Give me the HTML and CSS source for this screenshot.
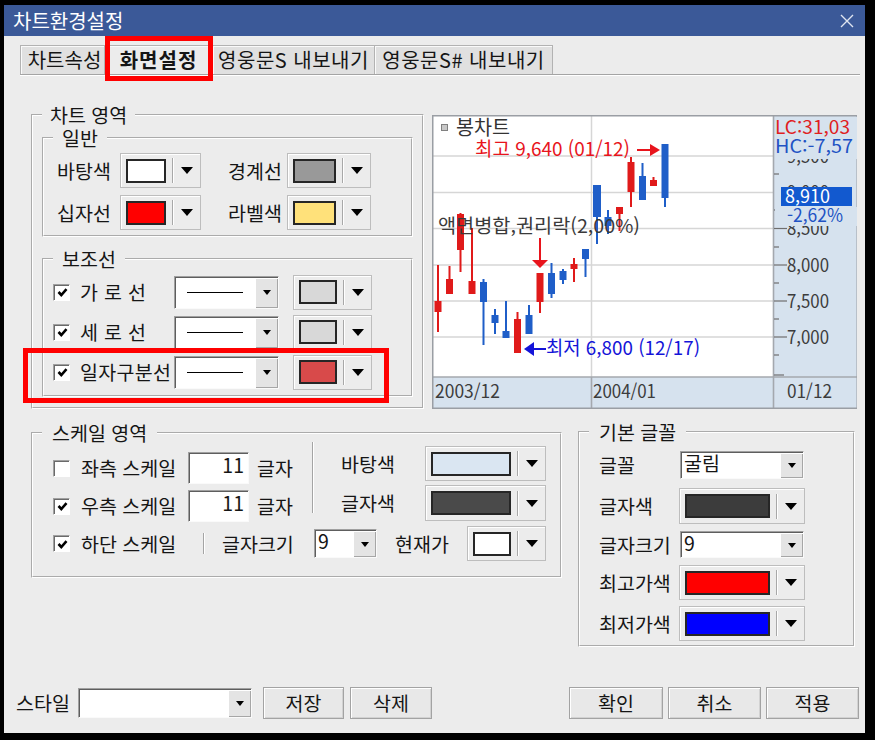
FILE: index.html
```html
<!DOCTYPE html>
<html lang="ko">
<head>
<meta charset="utf-8">
<title>차트환경설정</title>
<link rel="stylesheet" href="styles.css">
</head>
<body>
<div class="window">
  <div class="titlebar">
    <span class="title">차트환경설정</span>
    <svg class="close" width="14" height="14" viewBox="0 0 14 14"><path d="M1 1 L13 13 M13 1 L1 13" stroke="#dfe5f0" stroke-width="1.4" fill="none"/></svg>
  </div>
  <div class="content">
    <div class="tabs">
      <div class="tab t1">차트속성</div>
      <div class="tab t2 active">화면설정</div>
      <div class="tab t3">영웅문S 내보내기</div>
      <div class="tab t4">영웅문S# 내보내기</div>
    </div>

    <div class="top">
      <fieldset class="group g-chart">
        <legend>차트 영역</legend>
        <fieldset class="group g-general">
          <legend>일반</legend>
          <div class="grow">
            <span class="lbl w63">바탕색</span>
            <div class="cc w81"><span class="sw c-white"></span><span class="sep"></span><span class="tri"></span></div>
            <span class="lbl w59 ml27">경계선</span>
            <div class="cc w84"><span class="sw c-gray"></span><span class="sep"></span><span class="tri"></span></div>
          </div>
          <div class="grow">
            <span class="lbl w63">십자선</span>
            <div class="cc w81"><span class="sw c-red"></span><span class="sep"></span><span class="tri"></span></div>
            <span class="lbl w59 ml27">라벨색</span>
            <div class="cc w84"><span class="sw c-yellow"></span><span class="sep"></span><span class="tri"></span></div>
          </div>
        </fieldset>
        <fieldset class="group g-aux">
          <legend>보조선</legend>
          <div class="arow">
            <span class="chk on"><svg width="11" height="11" viewBox="0 0 11 11"><path d="M1.5 5 L4.3 8 L9.5 2.2" stroke="#000" stroke-width="2.6" fill="none"/></svg></span>
            <span class="lbl alabel">가 로 선</span>
            <div class="lcombo sunk"><span class="lval"><span class="line"></span></span><span class="dbtn"><span class="stri"></span></span></div>
            <div class="cc w79 ml14"><span class="sw c-lgray"></span><span class="sep"></span><span class="tri"></span></div>
          </div>
          <div class="arow">
            <span class="chk on"><svg width="11" height="11" viewBox="0 0 11 11"><path d="M1.5 5 L4.3 8 L9.5 2.2" stroke="#000" stroke-width="2.6" fill="none"/></svg></span>
            <span class="lbl alabel">세 로 선</span>
            <div class="lcombo sunk"><span class="lval"><span class="line"></span></span><span class="dbtn"><span class="stri"></span></span></div>
            <div class="cc w79 ml14"><span class="sw c-lgray"></span><span class="sep"></span><span class="tri"></span></div>
          </div>
          <div class="arow">
            <span class="chk on"><svg width="11" height="11" viewBox="0 0 11 11"><path d="M1.5 5 L4.3 8 L9.5 2.2" stroke="#000" stroke-width="2.6" fill="none"/></svg></span>
            <span class="lbl alabel">일자구분선</span>
            <div class="lcombo sunk"><span class="lval"><span class="line"></span></span><span class="dbtn"><span class="stri"></span></span></div>
            <div class="cc w79 ml14"><span class="sw c-dred"></span><span class="sep"></span><span class="tri"></span></div>
          </div>
        </fieldset>
      </fieldset>

      <div class="chart">
        <svg width="426" height="294" viewBox="0 0 426 294">
          <rect x="0" y="0" width="426" height="294" fill="#d6e2ee"/>
          <rect x="1" y="1" width="340" height="261" fill="#ffffff"/>
          <g stroke="#d6d6d6" stroke-width="1.5">
            <line x1="1" y1="41" x2="341" y2="41"/>
            <line x1="1" y1="77.5" x2="341" y2="77.5"/>
            <line x1="1" y1="113.5" x2="341" y2="113.5"/>
            <line x1="1" y1="150" x2="341" y2="150"/>
            <line x1="1" y1="186" x2="341" y2="186"/>
            <line x1="1" y1="222" x2="341" y2="222"/>
            <line x1="159.5" y1="1" x2="159.5" y2="262"/>
          </g>
          <g stroke="#a4a8ae" stroke-width="1.6">
            <line x1="341.5" y1="0" x2="341.5" y2="294"/>
            <line x1="0" y1="262" x2="426" y2="262"/>
            <line x1="159.5" y1="262" x2="159.5" y2="294"/>
          </g>
          <rect x="0.75" y="0.75" width="424.5" height="292.5" fill="none" stroke="#9a9ea4" stroke-width="1.5"/>
          <g stroke="#6e6e6e" stroke-width="1.2">
            <line x1="342" y1="59" x2="347" y2="59"/>
            <line x1="342" y1="95" x2="347" y2="95"/>
            <line x1="342" y1="132" x2="347" y2="132"/>
            <line x1="342" y1="168" x2="347" y2="168"/>
            <line x1="342" y1="204" x2="347" y2="204"/>
            <line x1="342" y1="240" x2="347" y2="240"/>
            <line x1="342" y1="260" x2="352" y2="260"/>
            <line x1="342" y1="113.5" x2="355" y2="113.5"/>
            <line x1="342" y1="150" x2="355" y2="150"/>
            <line x1="342" y1="186" x2="355" y2="186"/>
            <line x1="342" y1="222" x2="355" y2="222"/>
          </g>
          <g class="st" fill="#3c3c3c" font-size="18">
            <text x="355" y="48" textLength="42" lengthAdjust="spacingAndGlyphs">9,500</text>
            <text x="355" y="84" textLength="42" lengthAdjust="spacingAndGlyphs">9,000</text>
            <text x="355" y="120" textLength="42" lengthAdjust="spacingAndGlyphs">8,500</text>
            <text x="355" y="156.5" textLength="42" lengthAdjust="spacingAndGlyphs">8,000</text>
            <text x="355" y="192.5" textLength="42" lengthAdjust="spacingAndGlyphs">7,500</text>
            <text x="355" y="228.5" textLength="42" lengthAdjust="spacingAndGlyphs">7,000</text>
          </g>
          <rect x="343" y="2" width="82" height="42" fill="#d6e2ee"/>
          <text class="st" x="343" y="19" font-size="18" fill="#e0201e" textLength="75" lengthAdjust="spacingAndGlyphs">LC:31,03</text>
          <text class="st" x="343" y="38" font-size="18" fill="#2152c4" textLength="78" lengthAdjust="spacingAndGlyphs">HC:-7,57</text>
          <rect x="349" y="72" width="71" height="19" fill="#1259cf"/>
          <text class="st" x="353" y="88" font-size="18" fill="#ffffff" textLength="45" lengthAdjust="spacingAndGlyphs">8,910</text>
          <rect x="343" y="92" width="82" height="19" fill="#d6e2ee"/>
          <text class="st" x="355" y="107" font-size="18" fill="#2152c4" textLength="56" lengthAdjust="spacingAndGlyphs">-2,62%</text>
          <g class="st" fill="#3c3c3c" font-size="18">
            <text x="3" y="283" textLength="65" lengthAdjust="spacingAndGlyphs">2003/12</text>
            <text x="161" y="283" textLength="63" lengthAdjust="spacingAndGlyphs">2004/01</text>
            <text x="355" y="283" textLength="45" lengthAdjust="spacingAndGlyphs">01/12</text>
          </g>
          <g fill="#e01a1a">
            <rect x="5" y="150" width="2" height="67"/><rect x="2.5" y="186" width="7" height="11"/>
            <rect x="16.5" y="151" width="2" height="28"/><rect x="14" y="164" width="7" height="15"/>
            <rect x="27.5" y="98" width="2" height="59"/><rect x="25" y="99" width="7" height="36"/>
            <rect x="39" y="113" width="2" height="65"/><rect x="36.5" y="166" width="7" height="13"/>
            <rect x="84.5" y="197" width="2" height="41"/><rect x="82" y="204" width="7" height="34"/>
            <rect x="107" y="158" width="2" height="40"/><rect x="104.5" y="158" width="7" height="29"/>
            <rect x="141" y="143" width="2" height="24"/><rect x="138.5" y="149" width="7" height="5"/>
            <rect x="186.5" y="92" width="2" height="24"/><rect x="184" y="92" width="7" height="7"/>
            <rect x="198" y="42" width="2" height="50"/><rect x="195.5" y="47" width="7" height="30"/>
            <rect x="220.5" y="62" width="2" height="9"/><rect x="218" y="65" width="7" height="6"/>
          </g>
          <g fill="#1f5ec8">
            <rect x="50.5" y="164" width="2" height="66"/><rect x="48" y="167" width="7" height="20"/>
            <rect x="62" y="194" width="2" height="25"/><rect x="59.5" y="200" width="7" height="8"/>
            <rect x="73" y="186" width="2" height="36"/><rect x="70.5" y="216" width="7" height="7"/>
            <rect x="96" y="190" width="2" height="29"/><rect x="93.5" y="200" width="7" height="19"/>
            <rect x="118.5" y="148" width="2" height="35"/><rect x="116" y="158" width="7" height="21"/>
            <rect x="130" y="154" width="2" height="15"/><rect x="127.5" y="156" width="7" height="9"/>
            <rect x="152.5" y="134" width="2" height="28"/><rect x="150" y="134" width="7" height="10"/>
            <rect x="164" y="70" width="2" height="59"/><rect x="161" y="70" width="8" height="32"/>
            <rect x="175" y="95" width="2" height="24"/><rect x="172.5" y="102" width="7" height="9"/>
            <rect x="209.5" y="48" width="2" height="37"/><rect x="207" y="61" width="7" height="24"/>
            <rect x="232" y="29" width="2" height="63"/><rect x="229.5" y="29" width="7" height="54"/>
          </g>
          <rect x="9.5" y="9.5" width="6" height="6" fill="#c8c8c8" stroke="#808080" stroke-width="1"/>
          <text class="st" x="24" y="20" font-size="20" fill="#333333" textLength="54" lengthAdjust="spacingAndGlyphs">봉차트</text>
          <text class="st" x="43" y="41" font-size="19" fill="#e8141c" textLength="155" lengthAdjust="spacingAndGlyphs">최고 9,640 (01/12)</text>
          <line x1="205" y1="35" x2="220" y2="35" stroke="#e8141c" stroke-width="2"/>
          <polygon points="218,29 228,35 218,41" fill="#e8141c"/>
          <text class="st" x="6" y="118" font-size="19" fill="#3a3a3a" textLength="202" lengthAdjust="spacingAndGlyphs">액면병합,권리락(2,00%)</text>
          <line x1="108" y1="123" x2="108" y2="146" stroke="#e8141c" stroke-width="2"/>
          <polygon points="100,145 116,145 108,153" fill="#e8141c"/>
          <polygon points="92,234 102,227 102,241" fill="#1414d8"/>
          <line x1="100" y1="234" x2="114" y2="234" stroke="#1414d8" stroke-width="2"/>
          <text class="st" x="114" y="240" font-size="19" fill="#1414d8" textLength="154" lengthAdjust="spacingAndGlyphs">최저 6,800 (12/17)</text>
        </svg>
      </div>
    </div>

    <div class="middle">
      <fieldset class="group g-scale">
        <legend>스케일 영역</legend>
        <div class="scale-top">
          <div class="sc-left">
            <div class="srow">
              <span class="chk"></span>
              <span class="lbl slabel">좌측 스케일</span>
              <span class="inp sunk">11</span>
              <span class="lbl ml8">글자</span>
            </div>
            <div class="srow">
              <span class="chk on"><svg width="11" height="11" viewBox="0 0 11 11"><path d="M1.5 5 L4.3 8 L9.5 2.2" stroke="#000" stroke-width="2.6" fill="none"/></svg></span>
              <span class="lbl slabel">우측 스케일</span>
              <span class="inp sunk">11</span>
              <span class="lbl ml8">글자</span>
            </div>
          </div>
          <span class="vsep"></span>
          <div class="sc-right">
            <div class="rrow">
              <span class="lbl w84">바탕색</span>
              <div class="cc w121"><span class="sw c-lblue"></span><span class="sep"></span><span class="tri"></span></div>
            </div>
            <div class="rrow r2">
              <span class="lbl w84">글자색</span>
              <div class="cc w121 h36"><span class="sw c-dgray"></span><span class="sep"></span><span class="tri"></span></div>
            </div>
          </div>
        </div>
        <div class="srow3">
          <span class="chk on"><svg width="11" height="11" viewBox="0 0 11 11"><path d="M1.5 5 L4.3 8 L9.5 2.2" stroke="#000" stroke-width="2.6" fill="none"/></svg></span>
          <span class="lbl w122">하단 스케일</span>
          <span class="vsep2"></span>
          <span class="lbl w92 ml17">글자크기</span>
          <div class="sel sunk w63 h29"><span class="sval">9</span><span class="dbtn"><span class="stri"></span></span></div>
          <span class="lbl w72 ml18">현재가</span>
          <div class="cc w79"><span class="sw c-white"></span><span class="sep"></span><span class="tri"></span></div>
        </div>
      </fieldset>

      <fieldset class="group g-font">
        <legend>기본 글꼴</legend>
        <div class="frow f1">
          <span class="lbl w81">글꼴</span>
          <div class="sel sunk w124 h28"><span class="sval">굴림</span><span class="dbtn"><span class="stri"></span></span></div>
        </div>
        <div class="frow f2">
          <span class="lbl w81">글자색</span>
          <div class="cc w126 h36"><span class="sw c-char"></span><span class="sep"></span><span class="tri"></span></div>
        </div>
        <div class="frow f3">
          <span class="lbl w81">글자크기</span>
          <div class="sel sunk w124 h27"><span class="sval">9</span><span class="dbtn"><span class="stri"></span></span></div>
        </div>
        <div class="frow f4">
          <span class="lbl w81">최고가색</span>
          <div class="cc w126"><span class="sw c-red"></span><span class="sep"></span><span class="tri"></span></div>
        </div>
        <div class="frow f5">
          <span class="lbl w81">최저가색</span>
          <div class="cc w126"><span class="sw c-blue"></span><span class="sep"></span><span class="tri"></span></div>
        </div>
      </fieldset>
    </div>

    <div class="bottom">
      <span class="lbl w62">스타일</span>
      <div class="sel sunk w174 h30"><span class="sval"></span><span class="dbtn"><span class="stri"></span></span></div>
      <button class="btn b81 ml11">저장</button>
      <button class="btn b82 ml6">삭제</button>
      <div class="right-btns">
        <button class="btn b94">확인</button>
        <button class="btn b93">취소</button>
        <button class="btn b93">적용</button>
      </div>
    </div>
  </div>

  <div class="hl hl-tab"></div>
  <div class="hl hl-row"></div>
</div>
</body>
</html>
```

FILE: styles.css
```css
* { box-sizing: border-box; }
html, body { margin: 0; padding: 0; }
body {
  background: #000;
  width: 875px;
  height: 740px;
  overflow: hidden;
  font-family: "Noto Sans CJK KR", "Noto Sans", sans-serif;
  font-size: 19.5px;
  color: #151515;
}
.window {
  position: relative;
  width: 861px;
  height: 728px;
  margin: 5px 0 0 4px;
  background: #ececec;
}
.titlebar {
  height: 31px;
  background: #3b5998;
  display: flex;
  align-items: center;
  justify-content: space-between;
  padding: 0 11px 0 9px;
  color: #fff;
}
.title { font-size: 20px; line-height: 31px; }
.close { display: block; }

.content { padding-top: 9px; }

.tabs {
  display: flex;
  margin-left: 16px;
  width: 840px;
  height: 30px;
  border-bottom: 1px solid #a4a4a4;
  box-shadow: 0 1px 0 #fff;
}
.tab {
  height: 29px;
  border-top: 1px solid #b2b2b2;
  border-right: 1px solid #b2b2b2;
  background: #e0e0e0;
  box-shadow: inset 1px 1px 0 #fafafa;
  text-align: center;
  line-height: 27px;
  font-size: 20px;
  white-space: nowrap;
}
.tab.t1 { width: 85px; border-left: 1px solid #b2b2b2; padding-left: 4px; }
.tab.t2 { width: 108px; }
.tab.t3 { width: 162px; letter-spacing: 0.5px; }
.tab.t4 { width: 178px; letter-spacing: 0.5px; }
.tab.active { background: #ececec; font-weight: bold; letter-spacing: 1px; }

/* group boxes */
fieldset.group {
  margin: 0;
  min-width: 0;
  border: 2px groove #ffffff;
  padding: 0;
}
fieldset.group > legend {
  padding: 0 9px;
  height: 24px;
  line-height: 24px;
  font-size: 19.5px;
}

.top {
  display: grid;
  grid-template-columns: 393px 425px;
  column-gap: 8px;
  margin: 28px 0 0 27px;
  align-items: start;
}
.g-chart { padding: 0 9px 10px 9px !important; }
.g-chart > legend { padding: 0 8px !important; }
.g-general { margin-top: -1px !important; padding: 3px 9px 5px 9px !important; }
.g-aux { margin-top: 10px !important; padding: 3px 9px 5px 9px !important; }

.lbl { display: inline-block; white-space: nowrap; line-height: 24px; font-size: 19.5px; }
.w62 { width: 62px; }
.w63 { width: 63px; }
.w59 { width: 59px; }
.w72 { width: 72px; }
.w81 { width: 81px; }
.w84 { width: 84px; }
.w92 { width: 92px; }
.w122 { width: 122px; }
.ml6 { margin-left: 6px; }
.ml8 { margin-left: 8px; }
.ml11 { margin-left: 11px; }
.ml14 { margin-left: 14px; }
.ml17 { margin-left: 17px; }
.ml18 { margin-left: 18px; }
.ml27 { margin-left: 27px; }

.grow { display: flex; align-items: center; height: 35px; padding-left: 4px; }
.grow + .grow { margin-top: 7px; }

.arow { display: flex; align-items: center; height: 36px; }
.arow + .arow { margin-top: 4px; }
.alabel { width: 94px; margin-left: 10px; letter-spacing: 0.3px; }

/* colour combo */
.cc {
  display: flex;
  align-items: center;
  height: 35px;
  border: 1px solid #bdbdbd;
  background: #ececec;
  box-shadow: inset 1px 1px 0 #fff;
  padding-left: 5px;
  flex: none;
}
.cc.h36 { height: 36px; }
.cc .sw { flex: 1; height: 24px; border: 2px solid #262626; }
.cc .sep {
  width: 2px;
  height: 25px;
  border-left: 1px solid #a8a8a8;
  border-right: 1px solid #fff;
  margin: 0 7px 0 6px;
}
.cc .tri {
  width: 0; height: 0;
  border-left: 6px solid transparent;
  border-right: 6px solid transparent;
  border-top: 7px solid #000;
  margin-right: 7px;
}
.w79 { width: 79px; }
.w81.cc { width: 81px; }
.w84.cc { width: 84px; }
.w121 { width: 121px; }
.w126 { width: 126px; }

.c-white { background: #ffffff; }
.c-gray { background: #999999; }
.c-red { background: #ff0000; }
.c-yellow { background: #ffe17a; }
.c-lgray { background: #d8d8d8; }
.c-dred { background: #d84a4a; }
.c-lblue { background: #dae6f2; }
.c-dgray { background: #4a4a4a; }
.c-char { background: #3c3c3c; }
.c-blue { background: #0000ff; }

/* sunken controls */
.sunk {
  background: #fff;
  border-top: 1px solid #a0a0a0;
  border-left: 1px solid #a0a0a0;
  border-right: 1px solid #fafafa;
  border-bottom: 1px solid #fafafa;
  box-shadow: inset 1px 1px 0 #5e5e5e;
}
.lcombo { display: flex; width: 105px; height: 33px; flex: none; }
.lval { flex: 1; display: flex; align-items: center; padding-left: 12px; }
.line { display: block; width: 56px; height: 1px; background: #000; }
.dbtn {
  width: 23px;
  align-self: stretch;
  margin: 1px 0 0 0;
  background: #e4e4e4;
  box-shadow: inset 1px 1px 0 #fff, inset -1px -1px 0 #a6a6a6;
  display: flex;
  align-items: center;
  justify-content: center;
  flex: none;
}
.stri {
  width: 0; height: 0;
  border-left: 4.5px solid transparent;
  border-right: 4.5px solid transparent;
  border-top: 5px solid #000;
}
.sel { display: flex; flex: none; }
.sval { flex: 1; align-self: flex-start; line-height: 21px; padding-left: 3px; font-size: 19.5px; }
.w63.sel { width: 63px; }
.w124 { width: 124px; }
.w174 { width: 174px; }
.h27 { height: 27px; }
.h28 { height: 28px; }
.h29 { height: 29px; }
.h30 { height: 30px; }

.inp {
  display: block;
  width: 61px;
  height: 32px;
  text-align: right;
  padding-right: 4px;
  line-height: 24px;
  font-size: 19.5px;
  flex: none;
}

/* checkbox */
.chk {
  width: 17px;
  height: 17px;
  flex: none;
  background: #fff;
  border-top: 1px solid #a0a0a0;
  border-left: 1px solid #a0a0a0;
  border-right: 1px solid #fff;
  border-bottom: 1px solid #fff;
  box-shadow: inset 1px 1px 0 #6a6a6a;
  display: flex;
  align-items: center;
  justify-content: center;
}
.chk svg { display: block; margin: 1px 0 0 1px; }

/* chart */
.chart { margin-top: 12px; width: 425px; height: 294px; overflow: hidden; }
.chart svg { display: block; }
.st { font-family: "Noto Sans CJK KR", "Noto Sans", sans-serif; }

/* middle */
.middle {
  display: grid;
  grid-template-columns: 531px 277px;
  column-gap: 16px;
  margin: 12px 0 0 27px;
  align-items: start;
}
.g-scale { padding: 1px 14px 15px 9px !important; }
.g-scale > legend { padding: 0 10px !important; }
.scale-top { display: flex; }
.sc-left { width: 270px; padding-top: 3px; }
.srow { display: flex; align-items: center; height: 38px; }
.srow .chk { margin-left: 11px; }
.slabel { width: 107px; margin-left: 11px; }
.vsep {
  width: 2px;
  height: 71px;
  margin-top: -4px;
  border-left: 1px solid #a4a4a4;
  border-right: 1px solid #fff;
  flex: none;
}
.sc-right { padding-left: 27px; }
.rrow { display: flex; align-items: center; height: 35px; }
.rrow.r2 { margin-top: 4px; height: 36px; }
.srow3 { display: flex; align-items: center; height: 35px; margin-top: 1px; }
.srow3 .chk { margin-left: 11px; }
.srow3 .w122 { margin-left: 11px; }
.vsep2 {
  width: 2px;
  height: 21px;
  border-left: 1px solid #a4a4a4;
  border-right: 1px solid #fff;
  flex: none;
}

.g-font { margin-top: -1px !important; padding: 7px 9px 4px 9px !important; }
.g-font > legend { padding: 0 10px !important; }
.frow { display: flex; align-items: center; }
.frow .lbl { margin-left: 10px; }
.frow.f2 { margin-top: 9px; }
.frow.f3 { margin-top: 7px; }
.frow.f4 { margin-top: 7px; }
.frow.f5 { margin-top: 6px; }
.frow .cc { margin-left: -1px; }

/* bottom */
.bottom {
  display: flex;
  align-items: center;
  height: 32px;
  margin-top: 40px;
  padding: 0 6px 0 12px;
}
.btn {
  height: 32px;
  border: 1px solid #a3a3a3;
  background: #e8e8e8;
  box-shadow: inset 1px 1px 0 #fff, inset -1px -1px 0 #d2d2d2;
  font-family: "Noto Sans CJK KR", "Noto Sans", sans-serif;
  font-size: 19.5px;
  color: #151515;
  line-height: 28px;
  padding: 0;
  text-align: center;
  flex: none;
}
.b81 { width: 81px; }
.b82 { width: 82px; }
.b93 { width: 93px; }
.b94 { width: 94px; }
.right-btns { margin-left: auto; display: flex; gap: 5px; }

/* red highlight annotations */
.hl {
  position: absolute;
  border: 5px solid #ff0000;
  pointer-events: none;
}
.hl-tab { left: 101px; top: 31px; width: 108px; height: 45px; }
.hl-row { left: 19px; top: 343px; width: 366px; height: 55px; }
```
